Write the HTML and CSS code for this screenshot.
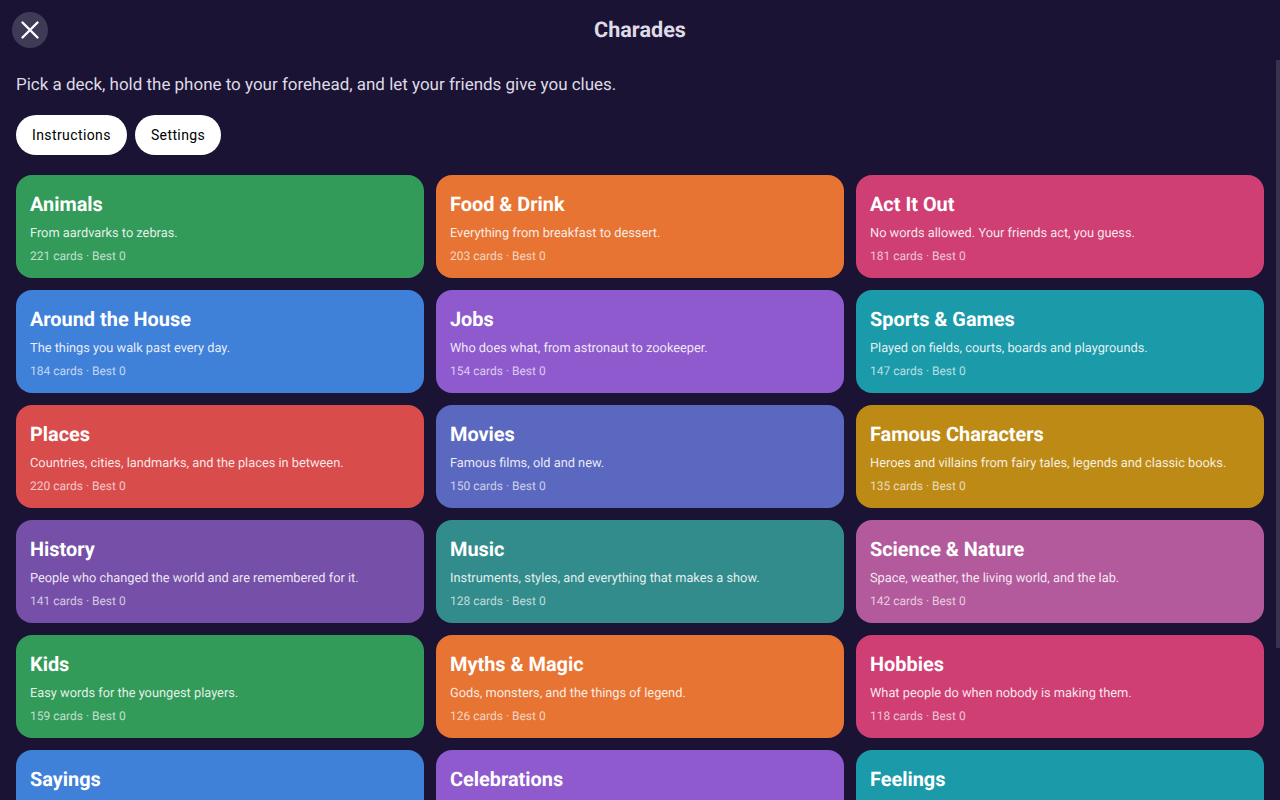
FILE: index.html
```html
<!DOCTYPE html>
<html lang="en">
<head>
    <meta charset="UTF-8">
    <meta name="viewport" content="width=device-width, initial-scale=1.0">
    <title>Charades</title>
    <link rel="stylesheet" href="styles.css">
</head>
<body>
    <div class="app">
        <header class="topbar">
            <button class="close-btn" aria-label="Close">
                <svg width="24" height="24" viewBox="0 0 24 24" fill="none" stroke="currentColor" stroke-width="2.4" stroke-linecap="round">
                    <path d="M4.5 4.5L19.5 19.5M19.5 4.5L4.5 19.5"/>
                </svg>
            </button>
            <h1>Charades</h1>
        </header>

        <main class="content">
            <p class="intro">Pick a deck, hold the phone to your forehead, and let your friends give you clues.</p>

            <div class="actions">
                <button class="pill">Instructions</button>
                <button class="pill">Settings</button>
            </div>

            <div class="decks">
                <div class="deck green"><h2>Animals</h2><p>From aardvarks to zebras.</p><span>221 cards · Best 0</span></div>
                <div class="deck orange"><h2>Food &amp; Drink</h2><p>Everything from breakfast to dessert.</p><span>203 cards · Best 0</span></div>
                <div class="deck pink"><h2>Act It Out</h2><p>No words allowed. Your friends act, you guess.</p><span>181 cards · Best 0</span></div>

                <div class="deck blue"><h2>Around the House</h2><p>The things you walk past every day.</p><span>184 cards · Best 0</span></div>
                <div class="deck purple"><h2>Jobs</h2><p>Who does what, from astronaut to zookeeper.</p><span>154 cards · Best 0</span></div>
                <div class="deck teal"><h2>Sports &amp; Games</h2><p>Played on fields, courts, boards and playgrounds.</p><span>147 cards · Best 0</span></div>

                <div class="deck red"><h2>Places</h2><p>Countries, cities, landmarks, and the places in between.</p><span>220 cards · Best 0</span></div>
                <div class="deck indigo"><h2>Movies</h2><p>Famous films, old and new.</p><span>150 cards · Best 0</span></div>
                <div class="deck gold"><h2>Famous Characters</h2><p>Heroes and villains from fairy tales, legends and classic books.</p><span>135 cards · Best 0</span></div>

                <div class="deck violet"><h2>History</h2><p>People who changed the world and are remembered for it.</p><span>141 cards · Best 0</span></div>
                <div class="deck sea"><h2>Music</h2><p>Instruments, styles, and everything that makes a show.</p><span>128 cards · Best 0</span></div>
                <div class="deck mauve"><h2>Science &amp; Nature</h2><p>Space, weather, the living world, and the lab.</p><span>142 cards · Best 0</span></div>

                <div class="deck green"><h2>Kids</h2><p>Easy words for the youngest players.</p><span>159 cards · Best 0</span></div>
                <div class="deck orange"><h2>Myths &amp; Magic</h2><p>Gods, monsters, and the things of legend.</p><span>126 cards · Best 0</span></div>
                <div class="deck pink"><h2>Hobbies</h2><p>What people do when nobody is making them.</p><span>118 cards · Best 0</span></div>

                <div class="deck blue"><h2>Sayings</h2></div>
                <div class="deck purple"><h2>Celebrations</h2></div>
                <div class="deck teal"><h2>Feelings</h2></div>
            </div>
        </main>
        <div class="scroll-thumb"></div>
    </div>
</body>
</html>
```

FILE: styles.css
```css
* {
    box-sizing: border-box;
}
html, body {
    margin: 0;
    height: 100%;
    overflow: hidden;
}
body {
    font-family: Roboto, "Liberation Sans", sans-serif;
    background: #1a1333;
    color: #ffffff;
    text-rendering: geometricPrecision;
}
.app {
    position: relative;
    height: 100vh;
    display: flex;
    flex-direction: column;
}
.topbar {
    flex: 0 0 60px;
    position: relative;
    display: flex;
    align-items: center;
    justify-content: center;
}
.topbar h1 {
    margin: 0;
    padding-top: 1px;
    font-size: 21.6px;
    font-weight: 700;
    color: #dedae6;
}
.close-btn {
    position: absolute;
    left: 12px;
    top: 12px;
    width: 36px;
    height: 36px;
    padding: 0;
    border: none;
    border-radius: 50%;
    background: #3f3a55;
    color: #ffffff;
    display: flex;
    align-items: center;
    justify-content: center;
}
.content {
    flex: 1;
    overflow: hidden;
    padding: 0 16px 24px;
}
.scroll-thumb {
    position: absolute;
    top: 60px;
    right: 0;
    width: 4px;
    height: 588px;
    background: #37334d;
}
.intro {
    margin: 13px 0 18px;
    font-size: 16.98px;
    line-height: 24px;
    color: #dedae6;
}
.actions {
    display: flex;
    gap: 8px;
    margin-bottom: 20px;
}
.pill {
    height: 40px;
    padding: 0 16px;
    border: none;
    border-radius: 20px;
    background: #ffffff;
    color: #000000;
    font-family: inherit;
    font-size: 14px;
    font-weight: 400;
    letter-spacing: 0.4px;
    text-rendering: auto;
}
.decks {
    display: grid;
    grid-template-columns: repeat(3, 1fr);
    gap: 12px;
}
.deck {
    height: 103px;
    padding: 14px;
    border-radius: 16px;
}
.deck h2 {
    margin: 1px 0 5px;
    font-size: 19.9px;
    line-height: 30px;
    font-weight: 700;
}
.deck p {
    margin: 0 0 4px;
    font-size: 12.8px;
    line-height: 18px;
    color: rgba(255, 255, 255, 0.88);
}
.deck span {
    display: block;
    font-size: 12px;
    line-height: 18px;
    color: rgba(255, 255, 255, 0.7);
}
.green { background: #339b5a; }
.orange { background: #e77433; }
.pink { background: #cf3f74; }
.blue { background: #3f80d9; }
.purple { background: #8e5acd; }
.teal { background: #1b9aa9; }
.red { background: #d94c4c; }
.indigo { background: #5b68c0; }
.gold { background: #be8a16; }
.violet { background: #7650a8; }
.sea { background: #338c8c; }
.mauve { background: #b35a9c; }
```
